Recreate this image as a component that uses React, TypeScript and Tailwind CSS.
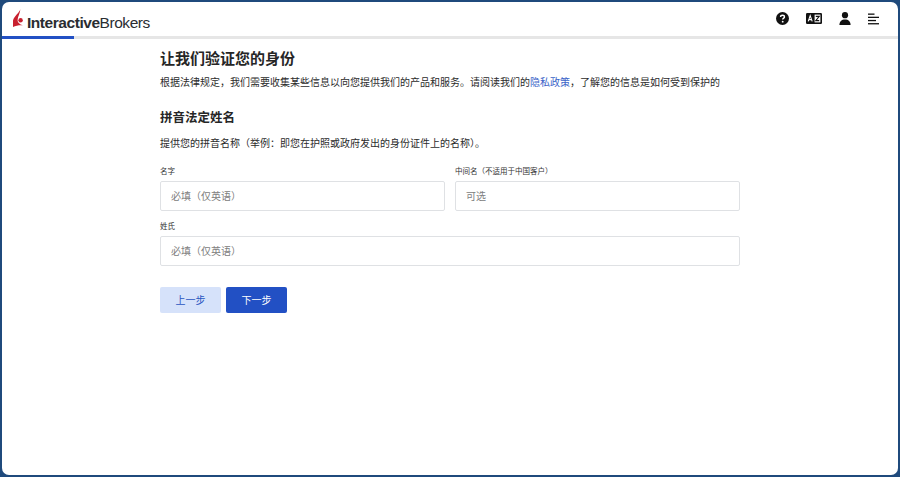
const FONT = "[font-family:Inter,'Noto_Sans_CJK_SC',sans-serif]";

function Logo() {
  return (
    <div className="flex items-end">
      <svg width="10" height="18" viewBox="0 0 10 18" className="mr-[4px] mb-[3px]">
        <path d="M7.4 0 C6.8 3.4 1.2 6.8 0 11.4 L0 18 C2.8 16.6 5.8 16 9.8 16.2 C6.6 15.4 4.6 13.6 4.6 11.2 C4.6 7.6 7.2 4.4 7.4 0 Z" fill="#c8202f" />
        <circle cx="7.6" cy="11.2" r="2.2" fill="#c8202f" />
      </svg>
      <span className="text-[15.5px] leading-none tracking-[-0.45px] text-[#2a2d31] font-['Liberation_Sans',sans-serif]">
        <span className="font-bold">Interactive</span>Brokers
      </span>
    </div>
  );
}

function HelpIcon() {
  return (
    <svg width="13" height="13" viewBox="0 0 14 14">
      <circle cx="7" cy="7" r="7" fill="#111" />
      <path d="M4.9 5.4 C4.9 4.1 5.9 3.5 7 3.5 C8.2 3.5 9.1 4.2 9.1 5.3 C9.1 6.6 7.2 6.7 7.2 8.2" fill="none" stroke="#fff" strokeWidth="1.5" />
      <circle cx="7.2" cy="10.4" r="1" fill="#fff" />
    </svg>
  );
}

function TranslateIcon() {
  return (
    <svg width="16" height="11" viewBox="0 0 16 11">
      <rect width="16" height="11" rx="1.2" fill="#111" />
      <path d="M2.2 8.4 L4.2 2.6 L6.2 8.4 M3 6.6 H5.4" fill="none" stroke="#fff" strokeWidth="1.1" />
      <rect x="8.6" y="1.6" width="5.8" height="7.8" fill="#fff" />
      <path d="M9.8 3.4 H13.2 L9.8 7.6 H13.2" fill="none" stroke="#111" strokeWidth="1.1" />
    </svg>
  );
}

function UserIcon() {
  return (
    <svg width="12" height="13" viewBox="0 0 12 13">
      <circle cx="6" cy="3.2" r="3.1" fill="#111" />
      <path d="M0.4 13 C0.4 9.4 2.6 7.4 6 7.4 C9.4 7.4 11.6 9.4 11.6 13 Z" fill="#111" />
    </svg>
  );
}

function MenuIcon() {
  return (
    <svg width="11" height="12" viewBox="0 0 11 12">
      <rect x="0" y="0.5" width="6.5" height="1.3" fill="#111" />
      <rect x="0" y="3.7" width="11" height="1.3" fill="#111" />
      <rect x="0" y="6.9" width="8" height="1.3" fill="#111" />
      <rect x="0" y="10.1" width="11" height="1.3" fill="#111" />
    </svg>
  );
}

function Field({ label, placeholder }: { label: string; placeholder: string }) {
  return (
    <div>
      <label className="block text-[7.5px] leading-[10px] mb-[4px] text-[#333]">{label}</label>
      <div className="h-[30px] rounded-[2px] border border-[#dfe1e4] bg-white flex items-center px-[10px] text-[10px] text-[#808080]">
        {placeholder}
      </div>
    </div>
  );
}

export default function App() {
  return (
    <div className={"w-[900px] h-[477px] bg-[#1f4a7c] p-[2px] overflow-hidden " + FONT}>
      <div className="h-full rounded-[7px] bg-white overflow-hidden flex flex-col">
        <header className="h-[34px] flex items-center justify-between pl-[11px] pr-[19px] pb-[1px] shrink-0">
          <div className="mt-[2px]">
            <Logo />
          </div>
          <div className="flex items-center gap-[17px]">
            <HelpIcon />
            <TranslateIcon />
            <UserIcon />
            <MenuIcon />
          </div>
        </header>
        <div className="h-[3px] bg-[#e6e6e6] shrink-0">
          <div className="h-full w-[72px] bg-[#2250c4]" />
        </div>

        <main className="w-[580px] mx-[158px] text-[#2b2b2b]">
          <h1 className="mt-[10px] text-[15px] leading-[20px] font-semibold text-[#262626]">让我们验证您的身份</h1>
          <p className="mt-[6px] text-[10px] leading-[14px]">
            根据法律规定，我们需要收集某些信息以向您提供我们的产品和服务。请阅读我们的
            <a className="text-[#3a63c8]">隐私政策</a>
            ，了解您的信息是如何受到保护的
          </p>
          <h2 className="mt-[20px] text-[12.5px] leading-[17px] font-semibold text-[#262626]">拼音法定姓名</h2>
          <p className="mt-[10px] text-[10px] leading-[14px]">提供您的拼音名称（举例：即您在护照或政府发出的身份证件上的名称）。</p>

          <div className="mt-[17px] grid grid-cols-2 gap-x-[10px] gap-y-[11px]">
            <Field label="名字" placeholder="必填（仅英语）" />
            <Field label="中间名（不适用于中国客户）" placeholder="可选" />
            <div className="col-span-2">
              <Field label="姓氏" placeholder="必填（仅英语）" />
            </div>
          </div>

          <div className="mt-[21px] flex gap-[5px]">
            <button className="w-[61px] h-[26px] rounded-[2px] bg-[#d6e2fa] text-[#2a55c0] text-[10px]">上一步</button>
            <button className="w-[61px] h-[26px] rounded-[2px] bg-[#2250c4] text-white text-[10px]">下一步</button>
          </div>
        </main>
      </div>
    </div>
  );
}
